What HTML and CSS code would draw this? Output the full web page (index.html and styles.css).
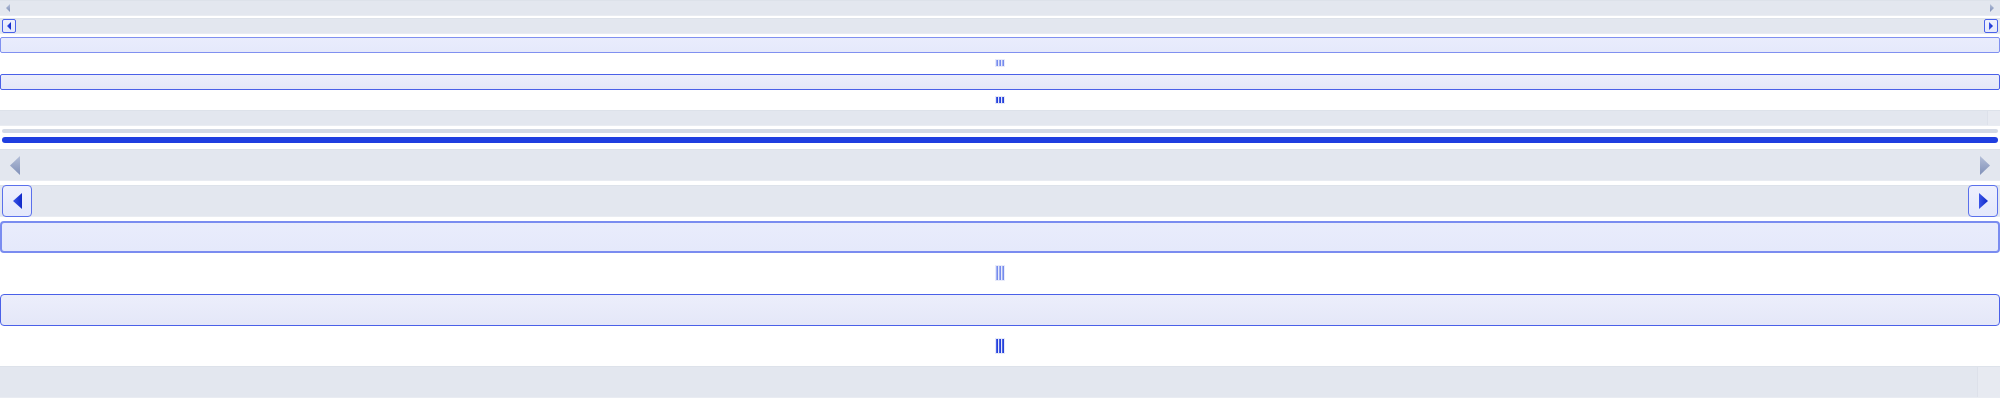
FILE: index.html
```html
<!DOCTYPE html>
<html>
<head>
<meta charset="utf-8">
<link rel="stylesheet" href="styles.css">
</head>
<body>
<svg class="defs" width="0" height="0">
  <defs>
    <linearGradient id="gArrow" x1="0" y1="0" x2="0" y2="1">
      <stop offset="0" stop-color="#b4bfd8"/>
      <stop offset="1" stop-color="#8090b8"/>
    </linearGradient>
    <linearGradient id="bArrow" x1="0" y1="0" x2="1" y2="0">
      <stop offset="0" stop-color="#3a55e8"/>
      <stop offset="1" stop-color="#1028c8"/>
    </linearGradient>
    <linearGradient id="gripL" x1="0" y1="0" x2="1" y2="0">
      <stop offset="0" stop-color="#b8c4f6"/>
      <stop offset="1" stop-color="#6078ea"/>
    </linearGradient>
    <linearGradient id="gripD" x1="0" y1="0" x2="1" y2="0">
      <stop offset="0" stop-color="#5a72f0"/>
      <stop offset="1" stop-color="#1530d0"/>
    </linearGradient>
  </defs>
</svg>
<div class="page">
  <div class="group small">
    <div class="row track arrows">
      <svg width="4" height="8" viewBox="0 0 4 8"><polygon points="4,0 4,8 0,4" fill="url(#gArrow)"/></svg>
      <svg width="4" height="8" viewBox="0 0 4 8"><polygon points="0,0 0,8 4,4" fill="url(#gArrow)"/></svg>
    </div>
    <div class="row track buttons">
      <div class="btn"><svg width="4" height="8" viewBox="0 0 4 8"><polygon points="4,0 4,8 0,4" fill="url(#bArrow)"/></svg></div>
      <div class="btn"><svg width="4" height="8" viewBox="0 0 4 8"><polygon points="0,0 0,8 4,4" fill="url(#bArrow)"/></svg></div>
    </div>
    <div class="row thumb shift"></div>
    <div class="row gripper-row">
      <svg width="10" height="8" viewBox="0 0 10 8"><rect width="10" height="8" fill="#e8ebfa"/><rect x="1" y="1" width="2" height="6" fill="url(#gripL)"/><rect x="4" y="1" width="2" height="6" fill="url(#gripL)"/><rect x="7" y="1" width="2" height="6" fill="url(#gripL)"/></svg>
    </div>
    <div class="row thumb hot shift"></div>
    <div class="row gripper-row">
      <svg width="10" height="8" viewBox="0 0 10 8"><rect width="10" height="8" fill="#e6e9f8"/><rect x="1" y="1" width="2" height="6" fill="url(#gripD)"/><rect x="4" y="1" width="2" height="6" fill="url(#gripD)"/><rect x="7" y="1" width="2" height="6" fill="url(#gripD)"/></svg>
    </div>
    <div class="row track cornered"><div class="fill"></div><div class="corner"></div></div>
  </div>
  <div class="bars">
    <div class="bar gray"></div>
    <div class="bar blue"></div>
  </div>
  <div class="group large">
    <div class="row track arrows">
      <svg width="10" height="19" viewBox="0 0 10 19"><polygon points="10,0 10,19 0,9.5" fill="url(#gArrow)"/></svg>
      <svg width="10" height="19" viewBox="0 0 10 19"><polygon points="0,0 0,19 10,9.5" fill="url(#gArrow)"/></svg>
    </div>
    <div class="row track buttons">
      <div class="btn"><svg width="9" height="16" viewBox="0 0 9 16"><polygon points="9,0 9,16 0,8" fill="url(#bArrow)"/></svg></div>
      <div class="btn"><svg width="9" height="16" viewBox="0 0 9 16"><polygon points="0,0 0,16 9,8" fill="url(#bArrow)"/></svg></div>
    </div>
    <div class="row thumb"></div>
    <div class="row gripper-row">
      <svg width="10" height="16" viewBox="0 0 10 16"><rect width="10" height="16" fill="#e8ebfa"/><rect x="1" y="1" width="2" height="14" fill="url(#gripL)"/><rect x="4" y="1" width="2" height="14" fill="url(#gripL)"/><rect x="7" y="1" width="2" height="14" fill="url(#gripL)"/></svg>
    </div>
    <div class="row thumb hot shift"></div>
    <div class="row gripper-row">
      <svg width="10" height="16" viewBox="0 0 10 16"><rect width="10" height="16" fill="#e6e9f8"/><rect x="1" y="1" width="2" height="14" fill="url(#gripD)"/><rect x="4" y="1" width="2" height="14" fill="url(#gripD)"/><rect x="7" y="1" width="2" height="14" fill="url(#gripD)"/></svg>
    </div>
    <div class="row track cornered"><div class="fill"></div><div class="corner"></div></div>
  </div>
</div>
</body>
</html>
```
FILE: styles.css
```css
html, body {
  margin: 0;
  padding: 0;
  background: #ffffff;
}
.defs {
  display: block;
  width: 0;
  height: 0;
  overflow: hidden;
}
.page {
  display: flex;
  flex-direction: column;
  width: 2000px;
}
.group {
  display: flex;
  flex-direction: column;
}
.small { gap: 2px; }
.large { gap: 4px; }
.small .row { height: 16px; }
.large .row { height: 32px; }
.row {
  box-sizing: border-box;
}
.shift { margin-top: 1px; }
.track {
  background: #e3e7ef;
  border-top: 1px solid #dde2ea;
  border-bottom: 1px solid #e9ecf2;
  display: flex;
  align-items: center;
  justify-content: space-between;
}
.track svg { display: block; }
.small .arrows { padding: 0 6px; }
.large .arrows { padding: 0 10px; }
.small .buttons { padding: 0 2px; }
.large .buttons { padding: 0 2px; }
.btn {
  box-sizing: border-box;
  display: flex;
  align-items: center;
  justify-content: center;
  background: linear-gradient(#eef0fd, #e4e8fb);
  border: 1px solid #4a62ea;
}
.small .btn {
  width: 14px;
  height: 14px;
  border-radius: 2px;
}
.large .btn {
  width: 30px;
  height: 32px;
  border-radius: 4px;
  border-width: 1.5px;
  border-color: #5a70ec;
}
.thumb {
  background: linear-gradient(#e9ecfc, #e5e9fb);
  border: 1px solid #8090f0;
  border-radius: 2px;
}
.thumb.hot {
  border-color: #4a60e8;
  background: linear-gradient(#eceefb, #e4e7f8);
}
.large .thumb {
  border-width: 2px;
  border-color: #7a8cf0;
  border-radius: 4px;
}
.large .thumb.hot {
  border-width: 1.5px;
  border-color: #4a60e8;
}
.gripper-row {
  display: flex;
  align-items: center;
  justify-content: center;
}
.gripper-row svg { display: block; }
.cornered {
  justify-content: flex-start;
  align-items: stretch;
}
.cornered .fill { flex: 1; }
.cornered .corner {
  background: #e7eaf1;
  border-left: 1px solid #dde1ea;
}
.small .corner { width: 12px; }
.large .corner { width: 22px; }
.bars {
  display: flex;
  flex-direction: column;
  gap: 4px;
  padding: 3px 2px 6px;
}
.bar { border-radius: 3px; }
.bar.gray {
  height: 4px;
  background: #d3d9e5;
}
.bar.blue {
  height: 6px;
  background: #1f3ee0;
}
```
